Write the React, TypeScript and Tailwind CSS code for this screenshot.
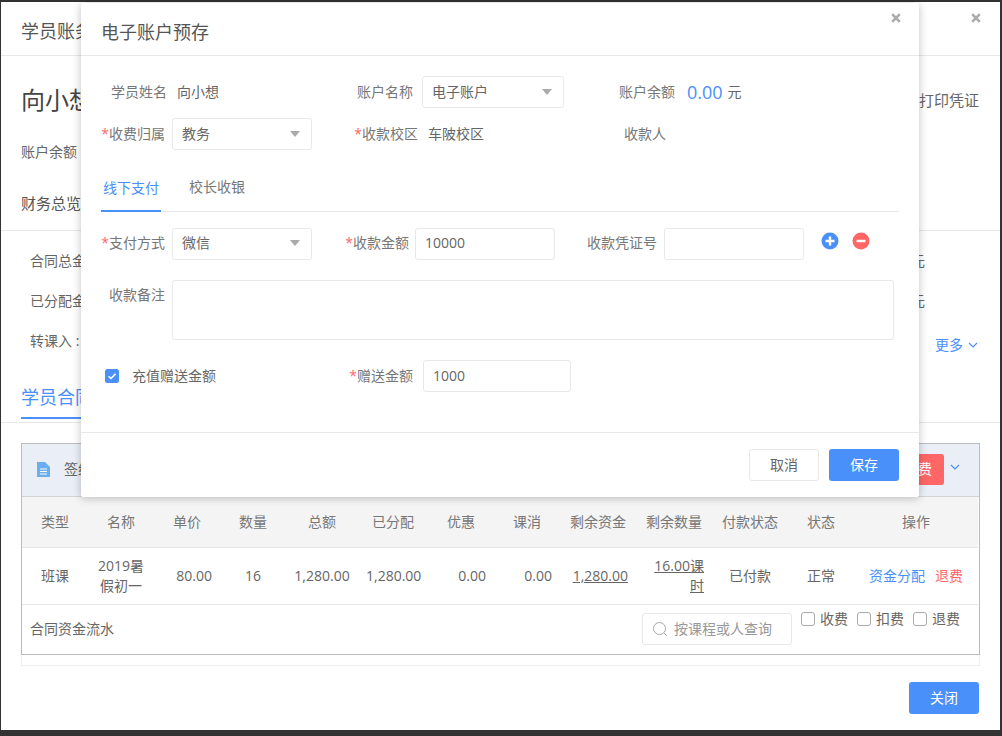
const Caret = () => (
  <svg width="12" height="6" viewBox="0 0 12 6" className="shrink-0">
    <path d="M1 0h10L6 6z" fill="#aaaaaa" />
  </svg>
)

const Close = ({ className }: { className: string }) => (
  <svg width="10" height="10" viewBox="0 0 10 10" className={className}>
    <path d="M1.2 1.2l7.6 7.6M8.8 1.2L1.2 8.8" stroke="#aaaaaa" strokeWidth="2.6" />
  </svg>
)

const Chevron = ({ className }: { className: string }) => (
  <svg width="10" height="6" viewBox="0 0 10 6" fill="none" className={className}>
    <path d="M1 1l4 4 4-4" stroke="#4a90fb" strokeWidth="1.2" />
  </svg>
)

const Star = () => <span className="text-[#ff6666]">*</span>

const Select = ({ value, className }: { value: string; className: string }) => (
  <div className={`h-[32px] flex items-center justify-between pl-[9px] pr-[10px] border border-[#e8e8e8] rounded-[3px] text-[#666] ${className}`}>
    <span>{value}</span>
    <Caret />
  </div>
)

const Input = ({ value, className }: { value?: string; className: string }) => (
  <div className={`h-[32px] flex items-center pl-[9px] border border-[#e8e8e8] rounded-[3px] text-[#666] ${className}`}>
    {value}
  </div>
)

const Check = ({ label }: { label: string }) => (
  <div className="flex items-center w-[56px]">
    <span className="w-[14px] h-[14px] border border-[#aaa] rounded-[3px]" />
    <span className="ml-[5px]">{label}</span>
  </div>
)

const headers = ['类型', '名称', '单价', '数量', '总额', '已分配', '优惠', '课消', '剩余资金', '剩余数量', '付款状态', '状态', '操作']
const widths = ['w-[66px]', 'w-[66px]', 'w-[66px]', 'w-[66px]', 'w-[72px]', 'w-[70px]', 'w-[66px]', 'w-[66px]', 'w-[76px]', 'w-[76px]', 'w-[76px]', 'w-[66px]', 'w-[124px]']

function ContractCard() {
  return (
    <div className="mx-[20px] mt-[20px] h-[212px] border border-[#bbbbbb] flex flex-col shrink-0">
      <div className="h-[53px] bg-[#eaeef7] border-b border-[#d4d4d4] flex items-center pl-[15px] pr-[19px] pb-[2px] shrink-0">
        <svg width="13" height="15" viewBox="0 0 13 15" className="shrink-0">
          <path d="M0 0h8l5 5v10H0z" fill="#6aaeee" />
          <path d="M3 7h7M3 9.5h7M3 12h7" stroke="#fff" strokeWidth="1" />
        </svg>
        <span className="ml-[14px] text-[#666]">签约日期</span>
        <div className="ml-auto h-[31px] w-[52px] bg-[#ff6666] rounded-[3px] text-white flex items-center justify-center">退费</div>
        <Chevron className="ml-[6px] mb-[4px]" />
      </div>
      <table className="table-fixed w-[956px] text-[#666] text-center border-collapse shrink-0">
        <thead>
          <tr className="h-[50px] bg-[#f4f4f4] border-b border-[#e8e8e8]">
            {headers.map((h, i) => (
              <th key={h} className={`font-normal text-[#777] ${widths[i]}`}>{h}</th>
            ))}
          </tr>
        </thead>
        <tbody>
          <tr className="h-[57px] border-b border-[#e8e8e8] leading-[20px]">
            <td className="px-[8px]">班课</td>
            <td className="px-[8px]">2019暑假初一</td>
            <td className="px-[8px] text-right">80.00</td>
            <td className="px-[8px]">16</td>
            <td className="px-[8px]">1,280.00</td>
            <td className="px-[8px]">1,280.00</td>
            <td className="px-[8px] text-right">0.00</td>
            <td className="px-[8px] text-right">0.00</td>
            <td className="px-[8px] text-right underline">1,280.00</td>
            <td className="px-[8px] text-right underline">16.00课时</td>
            <td className="px-[8px]">已付款</td>
            <td className="px-[8px]">正常</td>
            <td className="pl-[15px] text-left whitespace-nowrap">
              <span className="text-[#4a90fb]">资金分配</span>
              <span className="ml-[10px] text-[#ff6666]">退费</span>
            </td>
          </tr>
        </tbody>
      </table>
      <div className="flex-1 flex items-start pl-[8px] text-[#666]">
        <span className="mt-[14px]">合同资金流水</span>
        <div className="ml-auto mt-[8px] w-[150px] h-[32px] border border-[#e8e8e8] rounded-[3px] flex items-center pl-[9px] text-[#999]">
          <svg width="16" height="16" viewBox="0 0 16 16" fill="none" className="shrink-0">
            <circle cx="7.5" cy="7.5" r="6" stroke="#aaa" />
            <path d="M12 12l3 3" stroke="#aaa" />
          </svg>
          <span className="ml-[6px]">按课程或人查询</span>
        </div>
        <div className="ml-[9px] mt-[4px] w-[178px] flex h-[20px]">
          <Check label="收费" />
          <Check label="扣费" />
          <Check label="退费" />
        </div>
      </div>
    </div>
  )
}

function DepositModal() {
  return (
    <div className="absolute left-[80px] top-[1px] w-[838px] h-[494px] bg-white rounded-[2px] shadow-[0_1px_8px_rgba(0,0,0,0.25)] flex flex-col">
      <Close className="absolute right-[18px] top-[10px]" />
      <div className="h-[53px] border-b border-[#e8e8e8] flex items-center pl-[20px] text-[18px] text-[#555] pt-[6px] shrink-0">电子账户预存</div>
      <div className="pl-[20px] pt-[20px] text-[#777] flex-1">
        <div className="flex items-center h-[32px]">
          <div className="w-[239px] flex items-center">
            <span className="w-[66px] text-right">学员姓名</span>
            <span className="ml-[10px] text-[#666]">向小想</span>
          </div>
          <div className="w-[260px] flex items-center">
            <span className="w-[73px] text-right">账户名称</span>
            <Select value="电子账户" className="ml-[9px] w-[142px]" />
          </div>
          <div className="flex items-center">
            <span className="w-[75px] text-right">账户余额</span>
            <span className="ml-[12px] text-[18px] text-[#4a90fb]">0.00</span>
            <span className="ml-[5px] text-[#666]">元</span>
          </div>
        </div>
        <div className="flex items-center h-[32px] mt-[10px]">
          <div className="w-[239px] flex items-center">
            <span className="w-[64px] text-right"><Star />收费归属</span>
            <Select value="教务" className="ml-[7px] w-[140px]" />
          </div>
          <div className="w-[260px] flex items-center">
            <span className="w-[78px] text-right"><Star />收款校区</span>
            <span className="ml-[10px] text-[#666]">车陂校区</span>
          </div>
          <span className="w-[66px] text-right">收款人</span>
        </div>
        <div className="w-[798px] h-[62px] border-b border-[#e8e8e8] flex items-end">
          <div className="w-[60px] h-[34px] border-b-2 border-[#4a90fb] text-[#4a90fb] text-center -mb-px">线下支付</div>
          <div className="ml-[28px] h-[34px]">校长收银</div>
        </div>
        <div className="flex items-center h-[32px] mt-[16px]">
          <div className="w-[239px] flex items-center">
            <span className="w-[64px] mb-[2px] text-right"><Star />支付方式</span>
            <Select value="微信" className="ml-[7px] w-[140px] pb-[2px]" />
          </div>
          <div className="w-[240px] flex items-center">
            <span className="w-[69px] mb-[2px] text-right"><Star />收款金额</span>
            <Input value="10000" className="ml-[6px] w-[140px] pb-[2px]" />
          </div>
          <span className="w-[77px] mb-[2px] text-right">收款凭证号</span>
          <Input className="ml-[7px] w-[140px]" />
          <svg width="18" height="18" viewBox="0 0 18 18" className="ml-[17px] mb-[7px]">
            <circle cx="9" cy="9" r="8.5" fill="#4a90fb" />
            <path d="M9 4.5v9M4.5 9h9" stroke="#fff" strokeWidth="2.4" />
          </svg>
          <svg width="18" height="18" viewBox="0 0 18 18" className="ml-[13px] mb-[7px]">
            <circle cx="9" cy="9" r="8.5" fill="#ff6666" />
            <path d="M4.5 9h9" stroke="#fff" strokeWidth="2.4" />
          </svg>
        </div>
        <div className="flex mt-[20px]">
          <span className="w-[64px] mt-[5px] text-right">收款备注</span>
          <div className="ml-[7px] w-[722px] h-[60px] border border-[#e8e8e8] rounded-[3px]" />
        </div>
        <div className="flex items-center h-[32px] mt-[20px]">
          <div className="w-[248px] flex items-center pl-[4px]">
            <svg width="14" height="14" viewBox="0 0 14 14" className="shrink-0">
              <rect width="14" height="14" rx="2.5" fill="#4a90fb" />
              <path d="M3.5 7.2l2.4 2.3 4.6-4.6" stroke="#fff" strokeWidth="1.5" fill="none" />
            </svg>
            <span className="ml-[13px] text-[#666]">充值赠送金额</span>
          </div>
          <span className="w-[64px] text-right"><Star />赠送金额</span>
          <Input value="1000" className="ml-[10px] w-[148px]" />
        </div>
      </div>
      <div className="h-[65px] border-t border-[#e8e8e8] flex justify-end items-start pt-[16px] pr-[20px] shrink-0">
        <div className="w-[70px] h-[32px] border border-[#e8e8e8] rounded-[3px] flex items-center justify-center text-[#666]">取消</div>
        <div className="ml-[10px] w-[70px] h-[32px] bg-[#4a90fb] rounded-[3px] flex items-center justify-center text-white">保存</div>
      </div>
    </div>
  )
}

export default function App() {
  return (
    <div className="w-[1002px] h-[736px] bg-[#333] pt-[2px] pl-[1px] overflow-hidden text-[14px] leading-[20px] font-['Open_Sans','Noto_Sans_CJK_SC',sans-serif]">
      <div className="relative w-[999px] h-[728px] bg-white flex flex-col">
        <Close className="absolute right-[19px] top-[11px]" />
        <div className="h-[54px] border-b border-[#e8e8e8] flex items-center pl-[20px] pt-[4px] text-[18px] text-[#555] shrink-0">学员账务详情</div>
        <div className="h-[175px] border-b border-[#e8e8e8] shrink-0 text-[#666]">
          <div className="flex items-center justify-between pl-[20px] pr-[21px] mt-[27px]">
            <span className="text-[24px] leading-[34px] text-[#444]">向小想</span>
            <span className="text-[15px]">打印凭证</span>
          </div>
          <div className="pl-[20px] mt-[25px]">账户余额</div>
          <div className="pl-[20px] mt-[31px] text-[15px] text-[#555]">财务总览</div>
        </div>
        <div className="h-[192px] border-b border-[#e8e8e8] shrink-0 text-[#666]">
          <div className="flex justify-between pl-[29px] pr-[75px] mt-[20px]"><span>合同总金额</span><span>元</span></div>
          <div className="flex justify-between pl-[29px] pr-[75px] mt-[20px]"><span>已分配金额</span><span>元</span></div>
          <div className="flex justify-between pl-[29px] pr-[22px] mt-[20px]">
            <span>转课入 :</span>
            <span className="text-[#4a90fb] flex items-center mt-[4px]">更多<Chevron className="ml-[5px]" /></span>
          </div>
          <div className="pl-[20px] mt-[26px]">
            <div className="w-[72px] h-[38px] border-b-2 border-[#4a90fb] text-[18px] text-[#4a90fb] leading-[32px]">学员合同</div>
          </div>
        </div>
        <ContractCard />
        <div className="mx-[20px] h-[11px] border-b border-x border-[#efefef] shrink-0" />
        <div className="flex-1 flex justify-end pt-[16px] pr-[21px]">
          <div className="w-[70px] h-[32px] bg-[#4a90fb] rounded-[3px] flex items-center justify-center text-white">关闭</div>
        </div>
        <DepositModal />
      </div>
    </div>
  )
}
